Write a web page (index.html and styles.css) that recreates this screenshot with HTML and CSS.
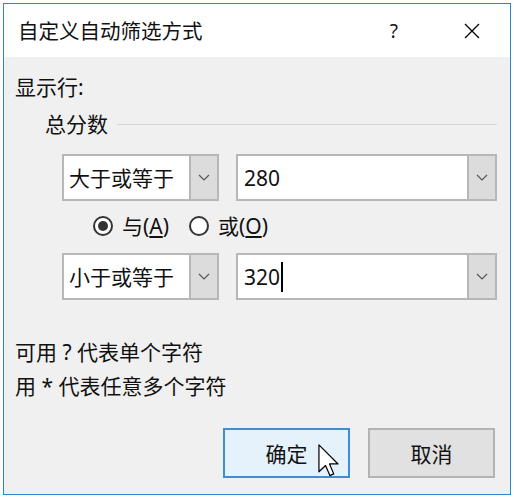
FILE: index.html
```html
<!DOCTYPE html>
<html lang="zh-CN">
<head>
    <meta charset="UTF-8">
    <title>自定义自动筛选方式</title>
    <link rel="stylesheet" href="styles.css">
</head>
<body>
    <div class="window">
        <div class="title-bar">
            <span class="title">自定义自动筛选方式</span>
            <span class="help">?</span>
            <svg class="close" width="16" height="16" viewBox="0 0 16 16">
                <path d="M1 1 L15 15 M15 1 L1 15" stroke="#000" stroke-width="1.3" fill="none"/>
            </svg>
        </div>
        <div class="content">
            <div class="label">显示行:</div>
            <div class="group">
                <span>总分数</span>
                <div class="group-line"></div>
            </div>

            <div class="criteria-row">
                <div class="combo op">
                    <span class="combo-text">大于或等于</span>
                    <span class="combo-btn"><svg width="12" height="7" viewBox="0 0 12 7"><path d="M1 1 L6 6 L11 1" stroke="#555" stroke-width="1.2" fill="none"/></svg></span>
                </div>
                <div class="combo value">
                    <span class="combo-text">280</span>
                    <span class="combo-btn"><svg width="12" height="7" viewBox="0 0 12 7"><path d="M1 1 L6 6 L11 1" stroke="#555" stroke-width="1.2" fill="none"/></svg></span>
                </div>
            </div>

            <div class="radio-row">
                <label class="radio checked"><span class="dot"></span><span>与(<u>A</u>)</span></label>
                <label class="radio"><span class="dot"></span><span>或(<u>O</u>)</span></label>
            </div>

            <div class="criteria-row second">
                <div class="combo op">
                    <span class="combo-text">小于或等于</span>
                    <span class="combo-btn"><svg width="12" height="7" viewBox="0 0 12 7"><path d="M1 1 L6 6 L11 1" stroke="#555" stroke-width="1.2" fill="none"/></svg></span>
                </div>
                <div class="combo value">
                    <span class="combo-text">320<span class="caret"></span></span>
                    <span class="combo-btn"><svg width="12" height="7" viewBox="0 0 12 7"><path d="M1 1 L6 6 L11 1" stroke="#555" stroke-width="1.2" fill="none"/></svg></span>
                </div>
            </div>

            <div class="hint first">可用 ? 代表单个字符</div>
            <div class="hint">用 * 代表任意多个字符</div>

            <div class="buttons">
                <button class="btn default">确定
                    <svg class="pointer" width="21" height="33" viewBox="0 0 12 19">
                        <path d="M0.5 0.5 L0.5 16 L4.3 12.4 L6.8 18.2 L9 17.2 L6.6 11.5 L11.5 11.5 Z" fill="#fff" stroke="#000" stroke-width="0.7" stroke-linejoin="round"/>
                    </svg>
                </button>
                <button class="btn">取消</button>
            </div>
        </div>
    </div>
</body>
</html>
```

FILE: styles.css
```css
* {
    margin: 0;
    padding: 0;
    box-sizing: border-box;
}

body {
    background: #fff;
    font-family: "Noto Sans", "Noto Sans CJK SC", sans-serif;
    font-size: 21px;
    color: #111;
}

.window {
    margin: 3px 0 0 3px;
    width: 508px;
    height: 492px;
    border: 1px solid #2b86d8;
    background: #f0f0f0;
    display: flex;
    flex-direction: column;
}

.title-bar {
    height: 53px;
    background: #fff;
    display: flex;
    align-items: center;
    padding-left: 14px;
}

.title {
    flex: 1;
    font-size: 20.5px;
    line-height: 24px;
}

.help {
    font-size: 19px;
    line-height: 24px;
    margin-right: 66px;
}

.close {
    margin-right: 30px;
}

.content {
    flex: 1;
    padding: 0 13px 0 11px;
}

.label {
    margin-top: 18px;
    line-height: 24px;
}

.group {
    margin-top: 13px;
    padding-left: 30px;
    display: flex;
    align-items: center;
    line-height: 24px;
}

.group-line {
    flex: 1;
    height: 1px;
    background: #d6d6d6;
    margin-left: 9px;
}

.criteria-row {
    margin-top: 18px;
    margin-left: 47px;
    display: flex;
    gap: 17px;
}

.criteria-row.second {
    margin-top: 12px;
}

.combo {
    height: 47px;
    border: 2px solid #b7b7b7;
    background: #fff;
    display: flex;
    align-items: stretch;
}

.combo.op {
    width: 157px;
}

.combo.value {
    width: 261px;
}

.combo-text {
    flex: 1;
    display: flex;
    align-items: center;
    padding-left: 5px;
    line-height: 24px;
}

.combo.value .combo-text {
    padding-left: 6px;
}

.caret {
    display: inline-block;
    width: 2px;
    height: 30px;
    background: #000;
    margin-left: 1px;
}

.combo-btn {
    width: 28px;
    background: #dcdcdc;
    border-left: 2px solid #b7b7b7;
    display: flex;
    align-items: center;
    justify-content: center;
}

.radio-row {
    margin-top: 10px;
    margin-left: 78px;
    height: 30px;
    display: flex;
    align-items: center;
    gap: 20px;
}

.radio {
    display: flex;
    align-items: center;
    gap: 9px;
    line-height: 24px;
}

.radio .dot {
    width: 20px;
    height: 20px;
    border: 2px solid #333;
    border-radius: 50%;
    background: #fff;
    display: flex;
    align-items: center;
    justify-content: center;
}

.radio.checked .dot::after {
    content: "";
    width: 10px;
    height: 10px;
    border-radius: 50%;
    background: #333;
}

.hint {
    margin-top: 4px;
    line-height: 30px;
}

.hint.first {
    margin-top: 37px;
}

.buttons {
    margin-top: 27px;
    display: flex;
    justify-content: flex-end;
    gap: 18px;
    padding-right: 2px;
}

.btn {
    position: relative;
    width: 127px;
    height: 50px;
    font-family: inherit;
    font-size: 21px;
    color: #111;
    background: #e1e1e1;
    border: 2px solid #b3b3b3;
}

.btn.default {
    background: #e5f1fb;
    border-color: #3b8fd9;
}

.pointer {
    position: absolute;
    left: 93px;
    top: 14px;
}
```
